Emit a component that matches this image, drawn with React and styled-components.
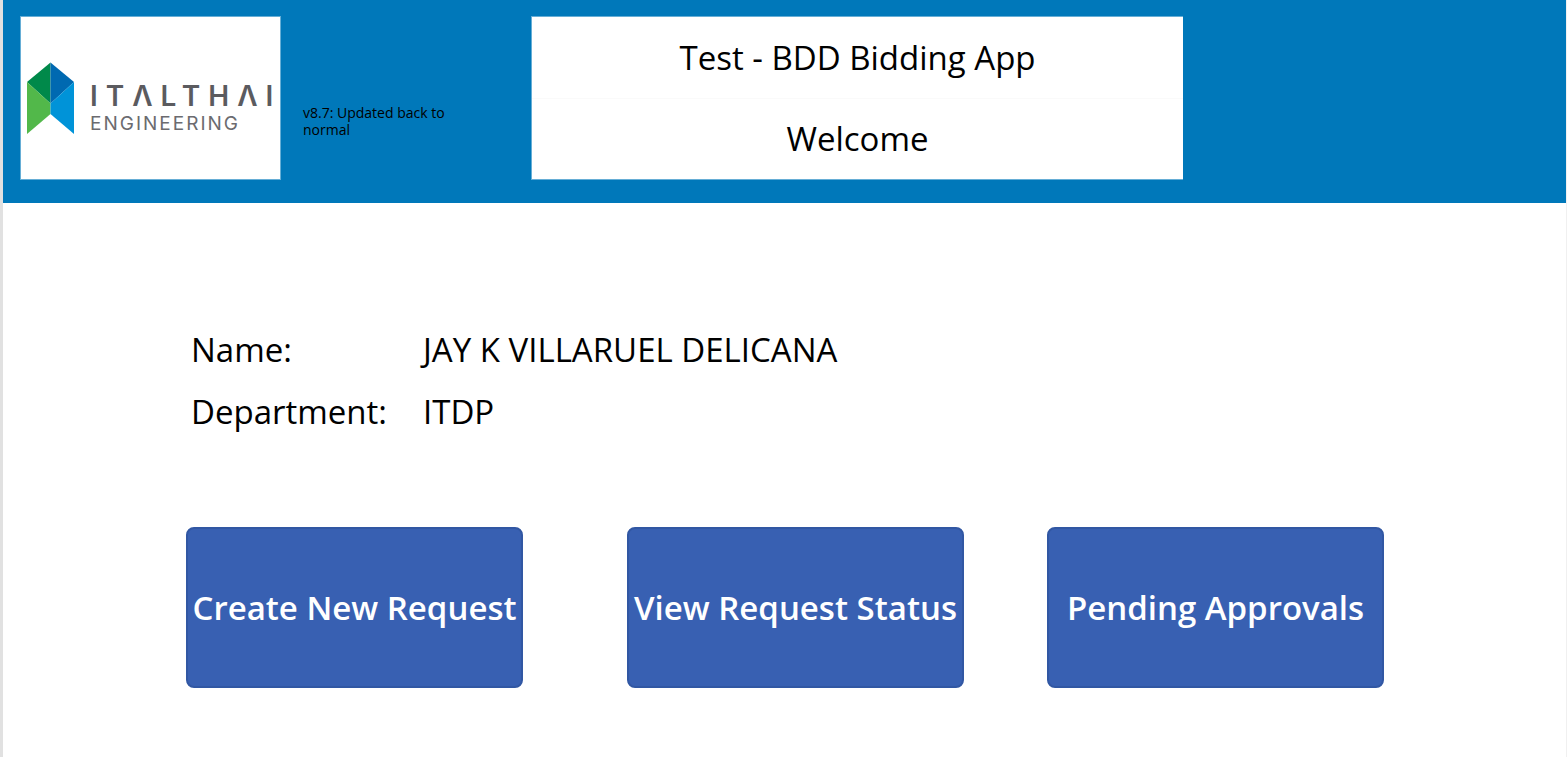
import React from "react";
import styled, { createGlobalStyle } from "styled-components";

const GlobalStyle = createGlobalStyle`
  *, *::before, *::after { box-sizing: border-box; }
  body {
    margin: 0;
    background: #ffffff;
    color: #000000;
    font-family: "Open Sans", "Noto Sans", sans-serif;
  }
`;

const Screen = styled.div`
  min-height: 100vh;
  border-left: 3px solid #e1e1e1;
  border-right: 1px solid #f0f0f0;
`;

const Header = styled.header`
  display: grid;
  grid-template-columns: 261fr 250fr 652fr 366fr;
  padding: 16px 17px 23px;
  background: #0078ba;
`;

const LogoCard = styled.div`
  display: flex;
  align-items: center;
  background: #ffffff;
  border: 1px solid #66aed6;
`;

const LogoArt = styled.svg`
  display: block;
  width: 100%;
  height: auto;
`;

const Version = styled.p`
  align-self: center;
  margin: 0;
  padding: 46px 60px 0 22px;
  font-size: 14px;
  line-height: 17px;
`;

const TitleCard = styled.div`
  background: #ffffff;
  border: 1px solid #66aed6;
  border-right: 0;
  text-align: center;
`;

const Title = styled.h1`
  margin: 0;
  font-size: 33px;
  font-weight: 400;
  line-height: 81px;

  & + & {
    border-top: 1px solid #fafafa;
    line-height: 80px;
  }
`;

const Main = styled.main`
  padding: 116px 182px 69px 183px;
`;

const Details = styled.dl`
  display: grid;
  grid-template-columns: 232px 1fr;
  margin: 0 0 84px;
  padding-left: 5px;
  font-size: 33px;
  line-height: 62px;
`;

const Term = styled.dt`
  margin: 0;
`;

const Value = styled.dd`
  margin: 0;
`;

const Actions = styled.nav`
  display: grid;
  grid-template-columns: 337fr 104fr 337fr 83fr 337fr;
`;

const ActionButton = styled.button`
  grid-column: ${({ $column }) => $column};
  height: 161px;
  padding: 0;
  border: 2px solid #3157a3;
  border-radius: 8px;
  background: #3860b2;
  color: #ffffff;
  font-family: inherit;
  font-size: 33px;
  font-weight: 600;
  line-height: 46px;
  white-space: nowrap;
  cursor: pointer;
`;

const Wordmark = styled.text`
  fill: #5b5b5f;
  font-family: Inter, sans-serif;
  font-size: 28px;
  font-weight: 600;
  letter-spacing: 8px;
`;

const Division = styled.text`
  fill: #6b6b6f;
  font-family: Inter, sans-serif;
  font-size: 19px;
  font-weight: 400;
  letter-spacing: 2px;
`;

const actions = [
  { label: "Create New Request", column: 1 },
  { label: "View Request Status", column: 3 },
  { label: "Pending Approvals", column: 5 },
];

function Logo() {
  return (
    <LogoArt viewBox="0 0 259 162" role="img" aria-label="Italthai Engineering">
      <path d="M6 65 29.500 45.500V86.500Z" fill="#00894a" />
      <path d="M29.500 45.500 53 65 29.500 86.500Z" fill="#0069b1" />
      <path d="M6 65 29.500 86.500V97L6 117Z" fill="#52b84a" />
      <path d="M53 65 29.500 86.500V97L53 117Z" fill="#0093d8" />
      <Wordmark x="69" y="89">ITΛLTHΛI</Wordmark>
      <Division x="69" y="113">ENGINEERING</Division>
    </LogoArt>
  );
}

export default function App() {
  return (
    <>
      <GlobalStyle />
      <Screen>
        <Header>
          <LogoCard>
            <Logo />
          </LogoCard>
          <Version>v8.7: Updated back to normal</Version>
          <TitleCard>
            <Title>Test - BDD Bidding App</Title>
            <Title as="p">Welcome</Title>
          </TitleCard>
        </Header>
        <Main>
          <Details>
            <Term>Name:</Term>
            <Value>JAY K VILLARUEL DELICANA</Value>
            <Term>Department:</Term>
            <Value>ITDP</Value>
          </Details>
          <Actions aria-label="Requests">
            {actions.map(({ label, column }) => (
              <ActionButton key={label} type="button" $column={column}>
                {label}
              </ActionButton>
            ))}
          </Actions>
        </Main>
      </Screen>
    </>
  );
}
